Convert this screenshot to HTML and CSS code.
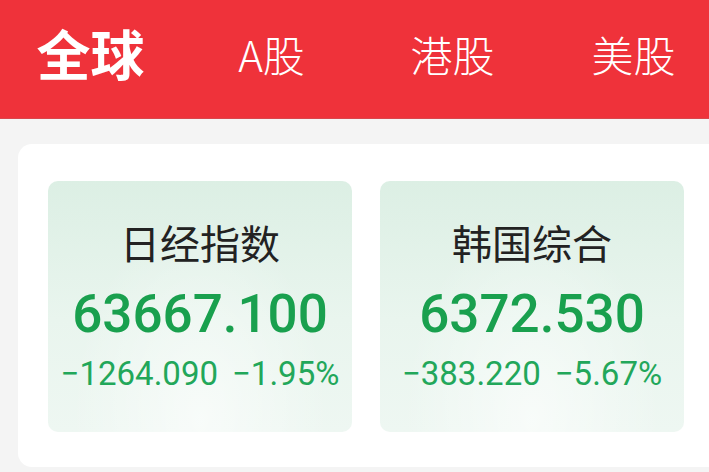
FILE: index.html
```html
<!DOCTYPE html>
<html lang="zh-CN">
<head>
    <meta charset="UTF-8">
    <meta name="viewport" content="width=device-width, initial-scale=1.0">
    <title>行情</title>
    <link rel="stylesheet" href="styles.css">
</head>
<body>
    <div class="tabs">
        <div class="tab active">全球</div>
        <div class="tab">A股</div>
        <div class="tab">港股</div>
        <div class="tab">美股</div>
    </div>
    <div class="content">
        <div class="panel">
            <div class="index-card">
                <div class="name">日经指数</div>
                <div class="price">63667.100</div>
                <div class="change">
                    <span>&minus;1264.090</span>
                    <span>&minus;1.95%</span>
                </div>
            </div>
            <div class="index-card">
                <div class="name">韩国综合</div>
                <div class="price">6372.530</div>
                <div class="change">
                    <span>&minus;383.220</span>
                    <span>&minus;5.67%</span>
                </div>
            </div>
        </div>
    </div>
</body>
</html>
```

FILE: styles.css
```css
body {
    margin: 0;
    width: 709px;
    height: 472px;
    overflow: hidden;
    background-color: #f4f4f4;
    font-family: "Noto Sans CJK SC", "Noto Sans", sans-serif;
}

/* top market switcher */
.tabs {
    display: flex;
    align-items: center;
    height: 119px;
    box-sizing: border-box;
    padding-bottom: 12px;
    background-color: #ef323a;
    border-bottom: 1px solid #d9474c;
}
.tab {
    width: 181px;
    flex: none;
    text-align: center;
    color: #fff;
    font-size: 42px;
    font-weight: 300;
    line-height: 60px;
    padding-top: 2px;
}
.tab.active {
    font-size: 54px;
    font-weight: bold;
    padding-top: 0;
}

.content {
    padding: 25px 0 0 18px;
}
.panel {
    display: flex;
    gap: 28px;
    height: 323px;
    box-sizing: border-box;
    padding: 37px 0 0 30px;
    margin-right: -30px;
    background: #fff;
    border-radius: 14px;
}

.index-card {
    flex: none;
    width: 304px;
    height: 251px;
    box-sizing: border-box;
    padding-top: 37px;
    display: flex;
    flex-direction: column;
    align-items: center;
    border-radius: 10px;
    background:
        radial-gradient(ellipse at 50% 95%, rgba(255, 255, 255, 0.6), rgba(255, 255, 255, 0) 60%),
        linear-gradient(180deg, #dcefe4 0%, #e9f5ee 55%, #eef7f2 100%);
}
.name {
    font-size: 40px;
    line-height: 48px;
    color: #222;
}
.price {
    margin-top: 18px;
    font-family: Roboto, "Noto Sans", sans-serif;
    font-size: 53px;
    font-weight: 500;
    line-height: 60px;
    color: #19a04e;
}
.change {
    margin-top: 12px;
    display: flex;
    gap: 14px;
    font-family: Roboto, "Noto Sans", sans-serif;
    font-size: 33px;
    line-height: 36px;
    color: #22a75a;
}
```
